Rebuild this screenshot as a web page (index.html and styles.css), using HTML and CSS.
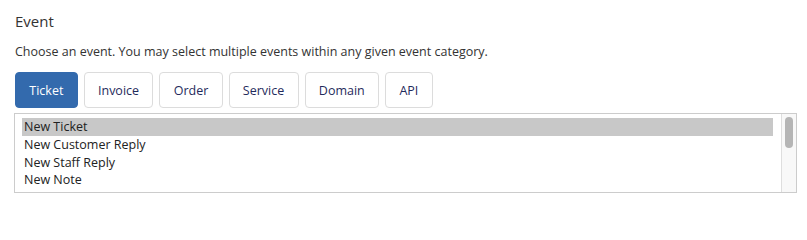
FILE: index.html
```html
<!DOCTYPE html>
<html lang="en">
<head>
<meta charset="utf-8">
<link rel="stylesheet" href="styles.css">
</head>
<body>
<div class="panel">
  <h2 class="title">Event</h2>
  <p class="desc">Choose an event. You may select multiple events within any given event category.</p>
  <div class="tabs">
    <button class="tab active">Ticket</button>
    <button class="tab">Invoice</button>
    <button class="tab">Order</button>
    <button class="tab">Service</button>
    <button class="tab">Domain</button>
    <button class="tab">API</button>
  </div>
  <div class="listbox">
    <div class="options">
      <div class="option selected">New Ticket</div>
      <div class="option">New Customer Reply</div>
      <div class="option">New Staff Reply</div>
      <div class="option">New Note</div>
      <div class="option">Status Change</div>
    </div>
    <div class="scrollbar"><div class="thumb"></div></div>
  </div>
</div>
</body>
</html>
```
FILE: styles.css
```css
html, body {
  margin: 0;
  padding: 0;
  background: #fff;
}
body {
  font-family: "Open Sans", "Liberation Sans", sans-serif;
  color: #333;
}
.panel {
  padding: 10px 10px 0 14px;
}
.title {
  margin: 0 0 0 1px;
  font-size: 15px;
  font-weight: 400;
  line-height: 22px;
  color: #333;
}
.desc {
  margin: 10px 0 0 1px;
  font-size: 12.5px;
  line-height: 20px;
  color: #333;
}
.tabs {
  display: flex;
  gap: 6px;
  margin: 10px 0 0 1px;
}
.tab {
  height: 36px;
  padding: 0 13.3px;
  border: 1px solid #dcdcdc;
  border-radius: 4px;
  background: #fff;
  color: #1f2b5c;
  font-family: "Open Sans", "Liberation Sans", sans-serif;
  font-size: 12.5px;
}
.tab.active {
  background: #336aad;
  border-color: #336aad;
  color: #fff;
}
.listbox {
  display: flex;
  margin-top: 5px;
  height: 80px;
  border: 1px solid #ccc;
  box-sizing: border-box;
  overflow: hidden;
}
.options {
  flex: 1;
  padding: 4px 8px 0 7px;
  overflow: hidden;
}
.option {
  height: 17.7px;
  line-height: 17.7px;
  padding: 0 2px;
  font-size: 12.5px;
  color: #222;
  white-space: nowrap;
}
.option.selected {
  background: #c8c8c8;
  height: 18px;
}
.scrollbar {
  background: #f8f8f8;
  border-left: 1px solid #dedede;
  padding: 3px 3px 0 3px;
  box-sizing: border-box;
  width: 15px;
}
.thumb {
  width: 8px;
  height: 31px;
  border-radius: 4px;
  background: #b5b5b5;
}
```
